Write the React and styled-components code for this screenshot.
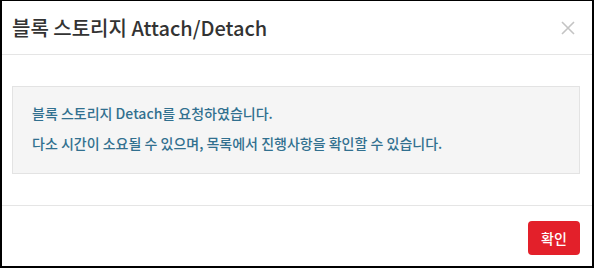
import styled, { createGlobalStyle } from "styled-components";

const GlobalStyle = createGlobalStyle`
  html, body {
    margin: 0;
    padding: 0;
    background: #fff;
  }
  body {
    font-family: "Noto Sans CJK KR", "Noto Sans", sans-serif;
  }
`;

const Dialog = styled.div`
  width: 594px;
  height: 268px;
  box-sizing: border-box;
  border-style: solid;
  border-color: #000;
  border-width: 1px 2px 2px 2px;
  background: #fff;
  display: flex;
  flex-direction: column;
`;

const Header = styled.div`
  height: 53px;
  flex: none;
  display: flex;
  align-items: center;
  justify-content: space-between;
  padding: 0 16px 0 10px;
  border-bottom: 1px solid #e5e5e5;
`;

const Title = styled.h4`
  margin: 0;
  font-size: 20px;
  font-weight: 500;
  color: #333;
`;

const CloseButton = styled.button`
  border: 0;
  background: none;
  padding: 0;
  width: 16px;
  height: 16px;
  cursor: pointer;
  display: flex;
`;

const Body = styled.div`
  height: 151px;
  flex: none;
  box-sizing: border-box;
  padding: 31px 12px 0 10px;
  border-bottom: 1px solid #e5e5e5;
`;

const Well = styled.div`
  height: 88px;
  box-sizing: border-box;
  background: #f5f5f5;
  border: 1px solid #e3e3e3;
  padding: 16px 19px;
  display: flex;
  flex-direction: column;
  gap: 10px;
`;

const Message = styled.p`
  margin: 0;
  font-size: 14px;
  line-height: 20px;
  font-weight: 500;
  color: #31708f;
`;

const Footer = styled.div`
  flex: 1;
  display: flex;
  justify-content: flex-end;
  align-items: flex-start;
  padding: 15px 12px 0 0;
`;

const ConfirmButton = styled.button`
  width: 52px;
  height: 34px;
  border: 0;
  border-radius: 4px;
  background: #e3202a;
  color: #fff;
  font-family: inherit;
  font-size: 14px;
  font-weight: 500;
  cursor: pointer;
`;

export default function App() {
  return (
    <>
      <GlobalStyle />
      <Dialog>
        <Header>
          <Title>블록 스토리지 Attach/Detach</Title>
          <CloseButton aria-label="닫기">
            <svg width="16" height="16" viewBox="0 0 16 16">
              <path d="M2 2 L14 14 M14 2 L2 14" stroke="#c4c4c4" strokeWidth="1.6" />
            </svg>
          </CloseButton>
        </Header>
        <Body>
          <Well>
            <Message>블록 스토리지 Detach를 요청하였습니다.</Message>
            <Message>다소 시간이 소요될 수 있으며, 목록에서 진행사항을 확인할 수 있습니다.</Message>
          </Well>
        </Body>
        <Footer>
          <ConfirmButton>확인</ConfirmButton>
        </Footer>
      </Dialog>
    </>
  );
}
